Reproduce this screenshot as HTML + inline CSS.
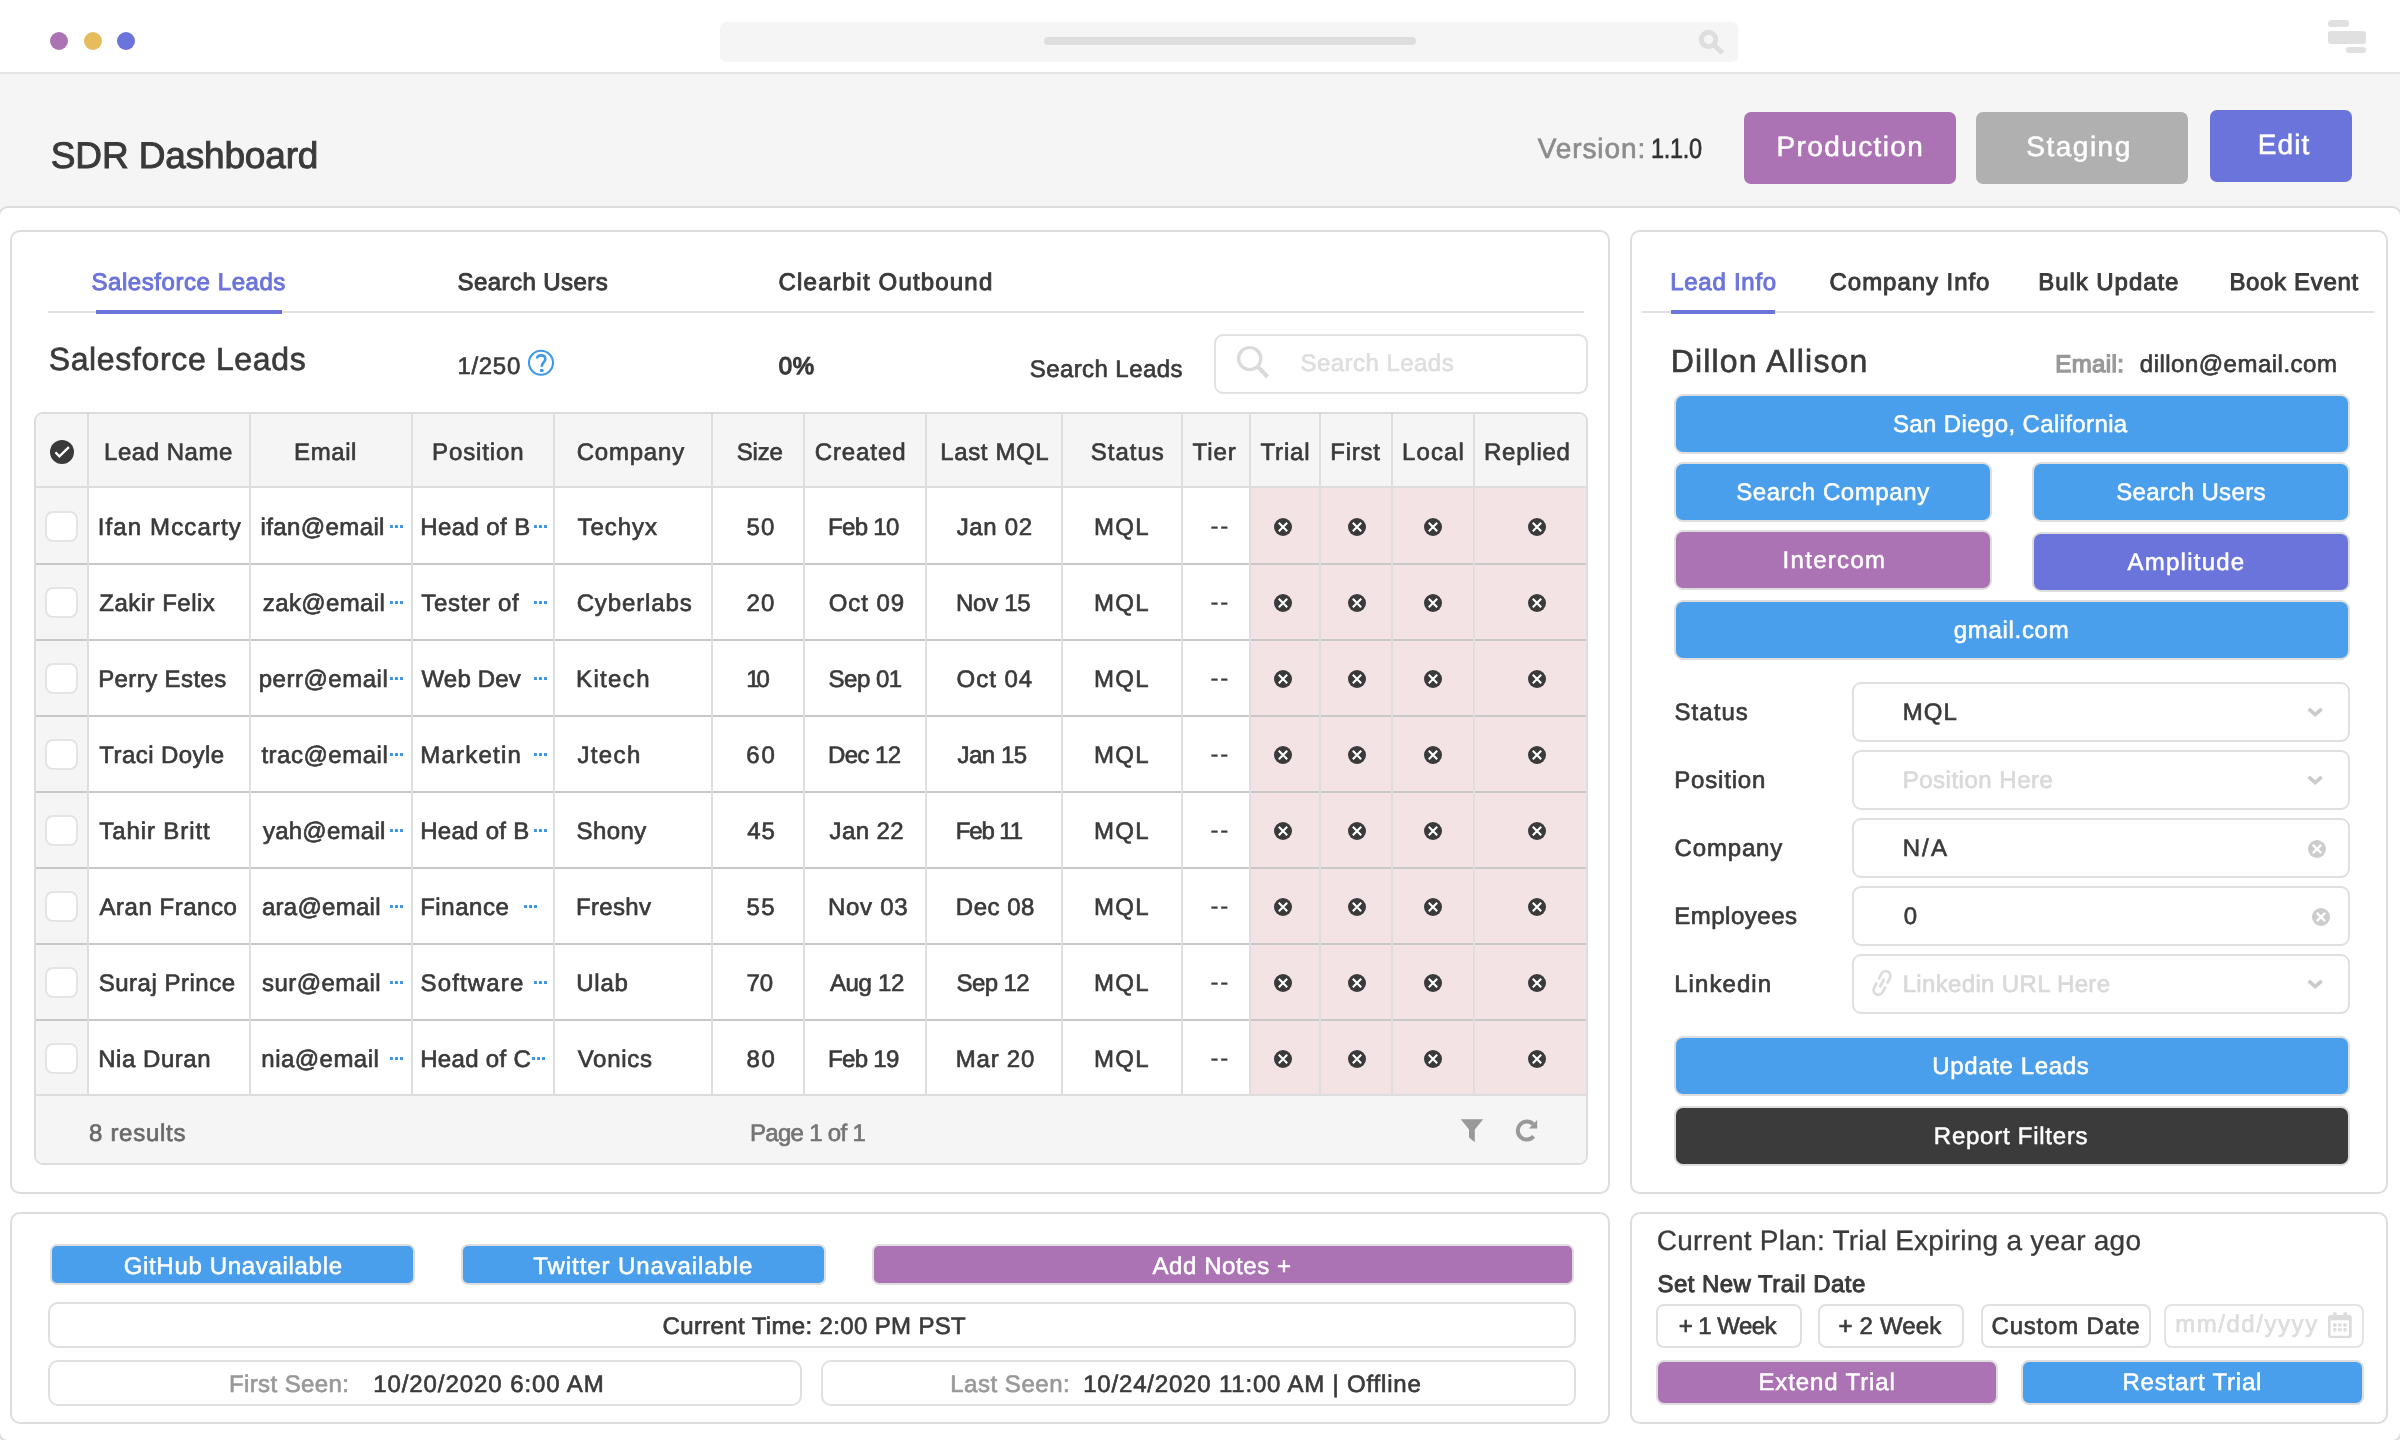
<!DOCTYPE html>
<html><head><meta charset="utf-8"><title>SDR Dashboard</title>
<style>
html,body{margin:0;padding:0;overflow:hidden}
body{width:2400px;height:1440px;overflow:hidden;background:#f5f5f5;position:relative;
font-family:"Liberation Sans",sans-serif;}
.b{position:absolute;box-sizing:border-box}
.tl{position:absolute;left:0;top:0;width:2400px;height:1440px;will-change:transform}
.t{position:absolute;white-space:pre;line-height:1;text-rendering:geometricPrecision;}
.m{-webkit-text-stroke:0.95px currentColor}
.r{-webkit-text-stroke:0.65px currentColor}
.bd{-webkit-text-stroke:1.3px currentColor}
.l{-webkit-text-stroke:0.3px currentColor}
.wm{-webkit-text-stroke:0.5px currentColor}
</style></head>
<body>
<div class="b" style="left:0px;top:0px;width:2400px;height:72px;background:#fff;"></div>
<div class="b" style="left:0px;top:72px;width:2400px;height:2px;background:#e6e6e6;"></div>
<div class="b" style="left:50px;top:32px;width:18px;height:18px;background:#ab72b4;border-radius:9px;"></div>
<div class="b" style="left:83.5px;top:32px;width:18px;height:18px;background:#e6bc5c;border-radius:9px;"></div>
<div class="b" style="left:117px;top:32px;width:18px;height:18px;background:#6b74da;border-radius:9px;"></div>
<div class="b" style="left:720px;top:22px;width:1018px;height:40px;background:#f5f5f5;border-radius:6px;"></div>
<div class="b" style="left:1044px;top:37px;width:372px;height:8px;background:#dedede;border-radius:4px;"></div>
<div class="b" style="left:2328px;top:20px;width:21px;height:7px;background:#e0e0e0;border-radius:3.5px;"></div>
<div class="b" style="left:2328px;top:30.5px;width:38px;height:13px;background:#e0e0e0;border-radius:3px;"></div>
<div class="b" style="left:2346px;top:46.5px;width:20px;height:6px;background:#e0e0e0;border-radius:3px;"></div>
<div class="b" style="left:1744px;top:112px;width:212px;height:72px;background:#ab72b4;border-radius:7px;"></div>
<div class="b" style="left:1976px;top:112px;width:212px;height:72px;background:#b0b0b0;border-radius:7px;"></div>
<div class="b" style="left:2210px;top:110px;width:142px;height:72px;background:#6b74da;border-radius:7px;"></div>
<div class="b" style="left:-2px;top:206px;width:2404px;height:1236px;background:#fff;border:2px solid #dddddd;border-radius:10px;"></div>
<div class="b" style="left:10px;top:230px;width:1600px;height:964px;background:#fff;border:2px solid #dddddd;border-radius:10px;"></div>
<div class="b" style="left:1630px;top:230px;width:758px;height:964px;background:#fff;border:2px solid #dddddd;border-radius:10px;"></div>
<div class="b" style="left:10px;top:1212px;width:1600px;height:212px;background:#fff;border:2px solid #dddddd;border-radius:10px;"></div>
<div class="b" style="left:1630px;top:1212px;width:758px;height:212px;background:#fff;border:2px solid #dddddd;border-radius:10px;"></div>
<div class="b" style="left:48px;top:311px;width:1536px;height:2px;background:#e0e0e0;"></div>
<div class="b" style="left:96px;top:310px;width:186px;height:4px;background:#6b74da;"></div>
<div class="b" style="left:1642px;top:311px;width:732px;height:2px;background:#e0e0e0;"></div>
<div class="b" style="left:1671px;top:310px;width:104px;height:4px;background:#6b74da;"></div>
<div class="b" style="left:1214px;top:334px;width:374px;height:60px;background:#fff;border:2px solid #e2e2e2;border-radius:9px;"></div>
<div class="b" style="left:34px;top:412px;width:1554px;height:753px;background:#fff;border:2px solid #dddddd;border-radius:9px;overflow:hidden;box-sizing:border-box">
<div class="b" style="left:0px;top:0px;width:1554px;height:72px;background:#f5f5f5"></div>
<div class="b" style="left:0px;top:72px;width:52px;height:610px;background:#f5f5f5"></div>
<div class="b" style="left:1215px;top:74px;width:337px;height:606px;background:#f3e3e4"></div>
<div class="b" style="left:0px;top:680px;width:1554px;height:71px;background:#f5f5f5"></div>
<div class="b" style="left:0px;top:72px;width:1554px;height:2px;background:#dddddd"></div>
<div class="b" style="left:0px;top:149px;width:1554px;height:2px;background:#c8c8c8"></div>
<div class="b" style="left:0px;top:225px;width:1554px;height:2px;background:#c8c8c8"></div>
<div class="b" style="left:0px;top:301px;width:1554px;height:2px;background:#c8c8c8"></div>
<div class="b" style="left:0px;top:377px;width:1554px;height:2px;background:#c8c8c8"></div>
<div class="b" style="left:0px;top:453px;width:1554px;height:2px;background:#c8c8c8"></div>
<div class="b" style="left:0px;top:529px;width:1554px;height:2px;background:#c8c8c8"></div>
<div class="b" style="left:0px;top:605px;width:1554px;height:2px;background:#c8c8c8"></div>
<div class="b" style="left:0px;top:680px;width:1554px;height:2px;background:#dddddd"></div>
<div class="b" style="left:51px;top:0px;width:2px;height:681px;background:#dedede"></div>
<div class="b" style="left:213px;top:0px;width:2px;height:681px;background:#dedede"></div>
<div class="b" style="left:375px;top:0px;width:2px;height:681px;background:#dedede"></div>
<div class="b" style="left:517px;top:0px;width:2px;height:681px;background:#dedede"></div>
<div class="b" style="left:675px;top:0px;width:2px;height:681px;background:#dedede"></div>
<div class="b" style="left:767px;top:0px;width:2px;height:681px;background:#dedede"></div>
<div class="b" style="left:889px;top:0px;width:2px;height:681px;background:#dedede"></div>
<div class="b" style="left:1025px;top:0px;width:2px;height:681px;background:#dedede"></div>
<div class="b" style="left:1145px;top:0px;width:2px;height:681px;background:#dedede"></div>
<div class="b" style="left:1213px;top:0px;width:2px;height:681px;background:#dedede"></div>
<div class="b" style="left:1283px;top:0px;width:2px;height:681px;background:#dedede"></div>
<div class="b" style="left:1355px;top:0px;width:2px;height:681px;background:#dedede"></div>
<div class="b" style="left:1437px;top:0px;width:2px;height:681px;background:#dedede"></div>
</div>
<div class="b" style="left:44.5px;top:510.5px;width:33px;height:31px;background:#fff;border:2px solid #e4e4e4;border-radius:8px;"></div>
<div class="b" style="left:44.5px;top:586.5px;width:33px;height:31px;background:#fff;border:2px solid #e4e4e4;border-radius:8px;"></div>
<div class="b" style="left:44.5px;top:662.5px;width:33px;height:31px;background:#fff;border:2px solid #e4e4e4;border-radius:8px;"></div>
<div class="b" style="left:44.5px;top:738.5px;width:33px;height:31px;background:#fff;border:2px solid #e4e4e4;border-radius:8px;"></div>
<div class="b" style="left:44.5px;top:814.5px;width:33px;height:31px;background:#fff;border:2px solid #e4e4e4;border-radius:8px;"></div>
<div class="b" style="left:44.5px;top:890.5px;width:33px;height:31px;background:#fff;border:2px solid #e4e4e4;border-radius:8px;"></div>
<div class="b" style="left:44.5px;top:966.5px;width:33px;height:31px;background:#fff;border:2px solid #e4e4e4;border-radius:8px;"></div>
<div class="b" style="left:44.5px;top:1042.5px;width:33px;height:31px;background:#fff;border:2px solid #e4e4e4;border-radius:8px;"></div>
<div class="b" style="left:1674px;top:394px;width:676px;height:60px;background:#4a9fed;border:2px solid #dedede;border-radius:9px;"></div>
<div class="b" style="left:1674px;top:462px;width:318px;height:60px;background:#4a9fed;border:2px solid #dedede;border-radius:9px;"></div>
<div class="b" style="left:2032px;top:462px;width:318px;height:60px;background:#4a9fed;border:2px solid #dedede;border-radius:9px;"></div>
<div class="b" style="left:1674px;top:530px;width:318px;height:60px;background:#ab72b4;border:2px solid #dedede;border-radius:9px;"></div>
<div class="b" style="left:2032px;top:532px;width:318px;height:60px;background:#6b74da;border:2px solid #dedede;border-radius:9px;"></div>
<div class="b" style="left:1674px;top:600px;width:676px;height:60px;background:#4a9fed;border:2px solid #dedede;border-radius:9px;"></div>
<div class="b" style="left:1852px;top:682px;width:498px;height:60px;background:#fff;border:2px solid #e0e0e0;border-radius:9px;"></div>
<div class="b" style="left:1852px;top:750px;width:498px;height:60px;background:#fff;border:2px solid #e0e0e0;border-radius:9px;"></div>
<div class="b" style="left:1852px;top:818px;width:498px;height:60px;background:#fff;border:2px solid #e0e0e0;border-radius:9px;"></div>
<div class="b" style="left:1852px;top:886px;width:498px;height:60px;background:#fff;border:2px solid #e0e0e0;border-radius:9px;"></div>
<div class="b" style="left:1852px;top:954px;width:498px;height:60px;background:#fff;border:2px solid #e0e0e0;border-radius:9px;"></div>
<div class="b" style="left:1674px;top:1036px;width:676px;height:60px;background:#4a9fed;border:2px solid #dedede;border-radius:9px;"></div>
<div class="b" style="left:1674px;top:1106px;width:676px;height:60px;background:#3b3b3b;border:2px solid #dedede;border-radius:9px;"></div>
<div class="b" style="left:1656px;top:1304px;width:146px;height:44px;background:#fff;border:2px solid #e0e0e0;border-radius:8px;"></div>
<div class="b" style="left:1818px;top:1304px;width:146px;height:44px;background:#fff;border:2px solid #e0e0e0;border-radius:8px;"></div>
<div class="b" style="left:1981px;top:1304px;width:170px;height:44px;background:#fff;border:2px solid #e0e0e0;border-radius:8px;"></div>
<div class="b" style="left:2164px;top:1304px;width:200px;height:44px;background:#fff;border:2px solid #e4e4e4;border-radius:8px;"></div>
<div class="b" style="left:1656px;top:1360px;width:342px;height:45px;background:#ab72b4;border:2px solid #dedede;border-radius:8px;"></div>
<div class="b" style="left:2021px;top:1360px;width:343px;height:45px;background:#4a9fed;border:2px solid #dedede;border-radius:8px;"></div>
<div class="b" style="left:50px;top:1244px;width:365px;height:41px;background:#4a9fed;border:2px solid #dedede;border-radius:7px;"></div>
<div class="b" style="left:461px;top:1244px;width:365px;height:41px;background:#4a9fed;border:2px solid #dedede;border-radius:7px;"></div>
<div class="b" style="left:872px;top:1244px;width:702px;height:41px;background:#ab72b4;border:2px solid #dedede;border-radius:7px;"></div>
<div class="b" style="left:48px;top:1302px;width:1528px;height:46px;background:#fff;border:2px solid #e0e0e0;border-radius:10px;"></div>
<div class="b" style="left:48px;top:1360px;width:754px;height:46px;background:#fff;border:2px solid #e0e0e0;border-radius:10px;"></div>
<div class="b" style="left:821px;top:1360px;width:755px;height:46px;background:#fff;border:2px solid #e0e0e0;border-radius:10px;"></div>
<div class="b" style="left:390px;top:525px;width:3px;height:3px;background:#3a94e8;border-radius:0.5px;"></div>
<div class="b" style="left:395px;top:525px;width:3px;height:3px;background:#3a94e8;border-radius:0.5px;"></div>
<div class="b" style="left:400px;top:525px;width:3px;height:3px;background:#3a94e8;border-radius:0.5px;"></div>
<div class="b" style="left:534px;top:525px;width:3px;height:3px;background:#3a94e8;border-radius:0.5px;"></div>
<div class="b" style="left:539px;top:525px;width:3px;height:3px;background:#3a94e8;border-radius:0.5px;"></div>
<div class="b" style="left:544px;top:525px;width:3px;height:3px;background:#3a94e8;border-radius:0.5px;"></div>
<div class="b" style="left:390px;top:601px;width:3px;height:3px;background:#3a94e8;border-radius:0.5px;"></div>
<div class="b" style="left:395px;top:601px;width:3px;height:3px;background:#3a94e8;border-radius:0.5px;"></div>
<div class="b" style="left:400px;top:601px;width:3px;height:3px;background:#3a94e8;border-radius:0.5px;"></div>
<div class="b" style="left:534px;top:601px;width:3px;height:3px;background:#3a94e8;border-radius:0.5px;"></div>
<div class="b" style="left:539px;top:601px;width:3px;height:3px;background:#3a94e8;border-radius:0.5px;"></div>
<div class="b" style="left:544px;top:601px;width:3px;height:3px;background:#3a94e8;border-radius:0.5px;"></div>
<div class="b" style="left:390px;top:677px;width:3px;height:3px;background:#3a94e8;border-radius:0.5px;"></div>
<div class="b" style="left:395px;top:677px;width:3px;height:3px;background:#3a94e8;border-radius:0.5px;"></div>
<div class="b" style="left:400px;top:677px;width:3px;height:3px;background:#3a94e8;border-radius:0.5px;"></div>
<div class="b" style="left:534px;top:677px;width:3px;height:3px;background:#3a94e8;border-radius:0.5px;"></div>
<div class="b" style="left:539px;top:677px;width:3px;height:3px;background:#3a94e8;border-radius:0.5px;"></div>
<div class="b" style="left:544px;top:677px;width:3px;height:3px;background:#3a94e8;border-radius:0.5px;"></div>
<div class="b" style="left:390px;top:753px;width:3px;height:3px;background:#3a94e8;border-radius:0.5px;"></div>
<div class="b" style="left:395px;top:753px;width:3px;height:3px;background:#3a94e8;border-radius:0.5px;"></div>
<div class="b" style="left:400px;top:753px;width:3px;height:3px;background:#3a94e8;border-radius:0.5px;"></div>
<div class="b" style="left:534px;top:753px;width:3px;height:3px;background:#3a94e8;border-radius:0.5px;"></div>
<div class="b" style="left:539px;top:753px;width:3px;height:3px;background:#3a94e8;border-radius:0.5px;"></div>
<div class="b" style="left:544px;top:753px;width:3px;height:3px;background:#3a94e8;border-radius:0.5px;"></div>
<div class="b" style="left:390px;top:829px;width:3px;height:3px;background:#3a94e8;border-radius:0.5px;"></div>
<div class="b" style="left:395px;top:829px;width:3px;height:3px;background:#3a94e8;border-radius:0.5px;"></div>
<div class="b" style="left:400px;top:829px;width:3px;height:3px;background:#3a94e8;border-radius:0.5px;"></div>
<div class="b" style="left:534px;top:829px;width:3px;height:3px;background:#3a94e8;border-radius:0.5px;"></div>
<div class="b" style="left:539px;top:829px;width:3px;height:3px;background:#3a94e8;border-radius:0.5px;"></div>
<div class="b" style="left:544px;top:829px;width:3px;height:3px;background:#3a94e8;border-radius:0.5px;"></div>
<div class="b" style="left:390px;top:905px;width:3px;height:3px;background:#3a94e8;border-radius:0.5px;"></div>
<div class="b" style="left:395px;top:905px;width:3px;height:3px;background:#3a94e8;border-radius:0.5px;"></div>
<div class="b" style="left:400px;top:905px;width:3px;height:3px;background:#3a94e8;border-radius:0.5px;"></div>
<div class="b" style="left:524px;top:905px;width:3px;height:3px;background:#3a94e8;border-radius:0.5px;"></div>
<div class="b" style="left:529px;top:905px;width:3px;height:3px;background:#3a94e8;border-radius:0.5px;"></div>
<div class="b" style="left:534px;top:905px;width:3px;height:3px;background:#3a94e8;border-radius:0.5px;"></div>
<div class="b" style="left:390px;top:981px;width:3px;height:3px;background:#3a94e8;border-radius:0.5px;"></div>
<div class="b" style="left:395px;top:981px;width:3px;height:3px;background:#3a94e8;border-radius:0.5px;"></div>
<div class="b" style="left:400px;top:981px;width:3px;height:3px;background:#3a94e8;border-radius:0.5px;"></div>
<div class="b" style="left:534px;top:981px;width:3px;height:3px;background:#3a94e8;border-radius:0.5px;"></div>
<div class="b" style="left:539px;top:981px;width:3px;height:3px;background:#3a94e8;border-radius:0.5px;"></div>
<div class="b" style="left:544px;top:981px;width:3px;height:3px;background:#3a94e8;border-radius:0.5px;"></div>
<div class="b" style="left:390px;top:1057px;width:3px;height:3px;background:#3a94e8;border-radius:0.5px;"></div>
<div class="b" style="left:395px;top:1057px;width:3px;height:3px;background:#3a94e8;border-radius:0.5px;"></div>
<div class="b" style="left:400px;top:1057px;width:3px;height:3px;background:#3a94e8;border-radius:0.5px;"></div>
<div class="b" style="left:532px;top:1057px;width:3px;height:3px;background:#3a94e8;border-radius:0.5px;"></div>
<div class="b" style="left:537px;top:1057px;width:3px;height:3px;background:#3a94e8;border-radius:0.5px;"></div>
<div class="b" style="left:542px;top:1057px;width:3px;height:3px;background:#3a94e8;border-radius:0.5px;"></div>
<svg class="b" style="left:1698px;top:29px" width="28" height="27" viewBox="0 0 28 27"><circle cx="10.5" cy="10.5" r="7.2" fill="none" stroke="#dedede" stroke-width="5"/><path d="M16 16 L24.5 24" stroke="#dedede" stroke-width="5" stroke-linecap="butt"/></svg>
<svg class="b" style="left:1235px;top:345px" width="38" height="38" viewBox="0 0 38 38"><circle cx="14.7" cy="13.6" r="11.1" fill="none" stroke="#dadada" stroke-width="3.2"/><path d="M22.4 21.4 L32.6 31.8" stroke="#dadada" stroke-width="4.2" stroke-linecap="butt"/></svg>
<svg class="b" style="left:527px;top:349px" width="28" height="28" viewBox="0 0 28 28"><circle cx="14" cy="13.8" r="12" fill="none" stroke="#3f99e9" stroke-width="2.1"/><path d="M10 9.6 C10 7.2 12 6.4 14.2 6.4 C16.6 6.4 18.3 7.9 18.3 10.1 C18.3 13.4 14.8 13.2 14.8 17.7" fill="none" stroke="#3f99e9" stroke-width="2.6"/><rect x="12.9" y="19.9" width="3.8" height="3.2" rx="1" fill="#3f99e9"/></svg>
<svg class="b" style="left:50px;top:440px" width="24" height="24" viewBox="0 0 24 24"><circle cx="12" cy="12" r="12" fill="#3a3a3a"/><path d="M5.4 12.3 L9.4 16.4 L18.9 7.1" fill="none" stroke="#fff" stroke-width="2.3" stroke-linecap="butt" stroke-linejoin="miter"/></svg>
<svg class="b" style="left:1274px;top:518px" width="18" height="18" viewBox="0 0 18 18"><circle cx="9" cy="9" r="9" fill="#3a3a3a"/><path d="M4.8 4.8 L13.2 13.2 M13.2 4.8 L4.8 13.2" stroke="#fff" stroke-width="2.1" stroke-linecap="butt"/></svg>
<svg class="b" style="left:1348px;top:518px" width="18" height="18" viewBox="0 0 18 18"><circle cx="9" cy="9" r="9" fill="#3a3a3a"/><path d="M4.8 4.8 L13.2 13.2 M13.2 4.8 L4.8 13.2" stroke="#fff" stroke-width="2.1" stroke-linecap="butt"/></svg>
<svg class="b" style="left:1424px;top:518px" width="18" height="18" viewBox="0 0 18 18"><circle cx="9" cy="9" r="9" fill="#3a3a3a"/><path d="M4.8 4.8 L13.2 13.2 M13.2 4.8 L4.8 13.2" stroke="#fff" stroke-width="2.1" stroke-linecap="butt"/></svg>
<svg class="b" style="left:1528px;top:518px" width="18" height="18" viewBox="0 0 18 18"><circle cx="9" cy="9" r="9" fill="#3a3a3a"/><path d="M4.8 4.8 L13.2 13.2 M13.2 4.8 L4.8 13.2" stroke="#fff" stroke-width="2.1" stroke-linecap="butt"/></svg>
<svg class="b" style="left:1274px;top:594px" width="18" height="18" viewBox="0 0 18 18"><circle cx="9" cy="9" r="9" fill="#3a3a3a"/><path d="M4.8 4.8 L13.2 13.2 M13.2 4.8 L4.8 13.2" stroke="#fff" stroke-width="2.1" stroke-linecap="butt"/></svg>
<svg class="b" style="left:1348px;top:594px" width="18" height="18" viewBox="0 0 18 18"><circle cx="9" cy="9" r="9" fill="#3a3a3a"/><path d="M4.8 4.8 L13.2 13.2 M13.2 4.8 L4.8 13.2" stroke="#fff" stroke-width="2.1" stroke-linecap="butt"/></svg>
<svg class="b" style="left:1424px;top:594px" width="18" height="18" viewBox="0 0 18 18"><circle cx="9" cy="9" r="9" fill="#3a3a3a"/><path d="M4.8 4.8 L13.2 13.2 M13.2 4.8 L4.8 13.2" stroke="#fff" stroke-width="2.1" stroke-linecap="butt"/></svg>
<svg class="b" style="left:1528px;top:594px" width="18" height="18" viewBox="0 0 18 18"><circle cx="9" cy="9" r="9" fill="#3a3a3a"/><path d="M4.8 4.8 L13.2 13.2 M13.2 4.8 L4.8 13.2" stroke="#fff" stroke-width="2.1" stroke-linecap="butt"/></svg>
<svg class="b" style="left:1274px;top:670px" width="18" height="18" viewBox="0 0 18 18"><circle cx="9" cy="9" r="9" fill="#3a3a3a"/><path d="M4.8 4.8 L13.2 13.2 M13.2 4.8 L4.8 13.2" stroke="#fff" stroke-width="2.1" stroke-linecap="butt"/></svg>
<svg class="b" style="left:1348px;top:670px" width="18" height="18" viewBox="0 0 18 18"><circle cx="9" cy="9" r="9" fill="#3a3a3a"/><path d="M4.8 4.8 L13.2 13.2 M13.2 4.8 L4.8 13.2" stroke="#fff" stroke-width="2.1" stroke-linecap="butt"/></svg>
<svg class="b" style="left:1424px;top:670px" width="18" height="18" viewBox="0 0 18 18"><circle cx="9" cy="9" r="9" fill="#3a3a3a"/><path d="M4.8 4.8 L13.2 13.2 M13.2 4.8 L4.8 13.2" stroke="#fff" stroke-width="2.1" stroke-linecap="butt"/></svg>
<svg class="b" style="left:1528px;top:670px" width="18" height="18" viewBox="0 0 18 18"><circle cx="9" cy="9" r="9" fill="#3a3a3a"/><path d="M4.8 4.8 L13.2 13.2 M13.2 4.8 L4.8 13.2" stroke="#fff" stroke-width="2.1" stroke-linecap="butt"/></svg>
<svg class="b" style="left:1274px;top:746px" width="18" height="18" viewBox="0 0 18 18"><circle cx="9" cy="9" r="9" fill="#3a3a3a"/><path d="M4.8 4.8 L13.2 13.2 M13.2 4.8 L4.8 13.2" stroke="#fff" stroke-width="2.1" stroke-linecap="butt"/></svg>
<svg class="b" style="left:1348px;top:746px" width="18" height="18" viewBox="0 0 18 18"><circle cx="9" cy="9" r="9" fill="#3a3a3a"/><path d="M4.8 4.8 L13.2 13.2 M13.2 4.8 L4.8 13.2" stroke="#fff" stroke-width="2.1" stroke-linecap="butt"/></svg>
<svg class="b" style="left:1424px;top:746px" width="18" height="18" viewBox="0 0 18 18"><circle cx="9" cy="9" r="9" fill="#3a3a3a"/><path d="M4.8 4.8 L13.2 13.2 M13.2 4.8 L4.8 13.2" stroke="#fff" stroke-width="2.1" stroke-linecap="butt"/></svg>
<svg class="b" style="left:1528px;top:746px" width="18" height="18" viewBox="0 0 18 18"><circle cx="9" cy="9" r="9" fill="#3a3a3a"/><path d="M4.8 4.8 L13.2 13.2 M13.2 4.8 L4.8 13.2" stroke="#fff" stroke-width="2.1" stroke-linecap="butt"/></svg>
<svg class="b" style="left:1274px;top:822px" width="18" height="18" viewBox="0 0 18 18"><circle cx="9" cy="9" r="9" fill="#3a3a3a"/><path d="M4.8 4.8 L13.2 13.2 M13.2 4.8 L4.8 13.2" stroke="#fff" stroke-width="2.1" stroke-linecap="butt"/></svg>
<svg class="b" style="left:1348px;top:822px" width="18" height="18" viewBox="0 0 18 18"><circle cx="9" cy="9" r="9" fill="#3a3a3a"/><path d="M4.8 4.8 L13.2 13.2 M13.2 4.8 L4.8 13.2" stroke="#fff" stroke-width="2.1" stroke-linecap="butt"/></svg>
<svg class="b" style="left:1424px;top:822px" width="18" height="18" viewBox="0 0 18 18"><circle cx="9" cy="9" r="9" fill="#3a3a3a"/><path d="M4.8 4.8 L13.2 13.2 M13.2 4.8 L4.8 13.2" stroke="#fff" stroke-width="2.1" stroke-linecap="butt"/></svg>
<svg class="b" style="left:1528px;top:822px" width="18" height="18" viewBox="0 0 18 18"><circle cx="9" cy="9" r="9" fill="#3a3a3a"/><path d="M4.8 4.8 L13.2 13.2 M13.2 4.8 L4.8 13.2" stroke="#fff" stroke-width="2.1" stroke-linecap="butt"/></svg>
<svg class="b" style="left:1274px;top:898px" width="18" height="18" viewBox="0 0 18 18"><circle cx="9" cy="9" r="9" fill="#3a3a3a"/><path d="M4.8 4.8 L13.2 13.2 M13.2 4.8 L4.8 13.2" stroke="#fff" stroke-width="2.1" stroke-linecap="butt"/></svg>
<svg class="b" style="left:1348px;top:898px" width="18" height="18" viewBox="0 0 18 18"><circle cx="9" cy="9" r="9" fill="#3a3a3a"/><path d="M4.8 4.8 L13.2 13.2 M13.2 4.8 L4.8 13.2" stroke="#fff" stroke-width="2.1" stroke-linecap="butt"/></svg>
<svg class="b" style="left:1424px;top:898px" width="18" height="18" viewBox="0 0 18 18"><circle cx="9" cy="9" r="9" fill="#3a3a3a"/><path d="M4.8 4.8 L13.2 13.2 M13.2 4.8 L4.8 13.2" stroke="#fff" stroke-width="2.1" stroke-linecap="butt"/></svg>
<svg class="b" style="left:1528px;top:898px" width="18" height="18" viewBox="0 0 18 18"><circle cx="9" cy="9" r="9" fill="#3a3a3a"/><path d="M4.8 4.8 L13.2 13.2 M13.2 4.8 L4.8 13.2" stroke="#fff" stroke-width="2.1" stroke-linecap="butt"/></svg>
<svg class="b" style="left:1274px;top:974px" width="18" height="18" viewBox="0 0 18 18"><circle cx="9" cy="9" r="9" fill="#3a3a3a"/><path d="M4.8 4.8 L13.2 13.2 M13.2 4.8 L4.8 13.2" stroke="#fff" stroke-width="2.1" stroke-linecap="butt"/></svg>
<svg class="b" style="left:1348px;top:974px" width="18" height="18" viewBox="0 0 18 18"><circle cx="9" cy="9" r="9" fill="#3a3a3a"/><path d="M4.8 4.8 L13.2 13.2 M13.2 4.8 L4.8 13.2" stroke="#fff" stroke-width="2.1" stroke-linecap="butt"/></svg>
<svg class="b" style="left:1424px;top:974px" width="18" height="18" viewBox="0 0 18 18"><circle cx="9" cy="9" r="9" fill="#3a3a3a"/><path d="M4.8 4.8 L13.2 13.2 M13.2 4.8 L4.8 13.2" stroke="#fff" stroke-width="2.1" stroke-linecap="butt"/></svg>
<svg class="b" style="left:1528px;top:974px" width="18" height="18" viewBox="0 0 18 18"><circle cx="9" cy="9" r="9" fill="#3a3a3a"/><path d="M4.8 4.8 L13.2 13.2 M13.2 4.8 L4.8 13.2" stroke="#fff" stroke-width="2.1" stroke-linecap="butt"/></svg>
<svg class="b" style="left:1274px;top:1050px" width="18" height="18" viewBox="0 0 18 18"><circle cx="9" cy="9" r="9" fill="#3a3a3a"/><path d="M4.8 4.8 L13.2 13.2 M13.2 4.8 L4.8 13.2" stroke="#fff" stroke-width="2.1" stroke-linecap="butt"/></svg>
<svg class="b" style="left:1348px;top:1050px" width="18" height="18" viewBox="0 0 18 18"><circle cx="9" cy="9" r="9" fill="#3a3a3a"/><path d="M4.8 4.8 L13.2 13.2 M13.2 4.8 L4.8 13.2" stroke="#fff" stroke-width="2.1" stroke-linecap="butt"/></svg>
<svg class="b" style="left:1424px;top:1050px" width="18" height="18" viewBox="0 0 18 18"><circle cx="9" cy="9" r="9" fill="#3a3a3a"/><path d="M4.8 4.8 L13.2 13.2 M13.2 4.8 L4.8 13.2" stroke="#fff" stroke-width="2.1" stroke-linecap="butt"/></svg>
<svg class="b" style="left:1528px;top:1050px" width="18" height="18" viewBox="0 0 18 18"><circle cx="9" cy="9" r="9" fill="#3a3a3a"/><path d="M4.8 4.8 L13.2 13.2 M13.2 4.8 L4.8 13.2" stroke="#fff" stroke-width="2.1" stroke-linecap="butt"/></svg>
<svg class="b" style="left:2308px;top:840px" width="18" height="18" viewBox="0 0 18 18"><circle cx="9" cy="9" r="9" fill="#cccccc"/><path d="M4.8 4.8 L13.2 13.2 M13.2 4.8 L4.8 13.2" stroke="#fff" stroke-width="2.4" stroke-linecap="butt"/></svg>
<svg class="b" style="left:2312px;top:908px" width="18" height="18" viewBox="0 0 18 18"><circle cx="9" cy="9" r="9" fill="#cccccc"/><path d="M4.8 4.8 L13.2 13.2 M13.2 4.8 L4.8 13.2" stroke="#fff" stroke-width="2.4" stroke-linecap="butt"/></svg>
<svg class="b" style="left:2306px;top:706px" width="18" height="12" viewBox="0 0 18 12"><path d="M2.7 2.9 L9.2 8.6 L15.7 2.9" fill="none" stroke="#cbcbcb" stroke-width="3.5" stroke-linecap="butt" stroke-linejoin="miter"/></svg>
<svg class="b" style="left:2306px;top:774px" width="18" height="12" viewBox="0 0 18 12"><path d="M2.7 2.9 L9.2 8.6 L15.7 2.9" fill="none" stroke="#cbcbcb" stroke-width="3.5" stroke-linecap="butt" stroke-linejoin="miter"/></svg>
<svg class="b" style="left:2306px;top:978px" width="18" height="12" viewBox="0 0 18 12"><path d="M2.7 2.9 L9.2 8.6 L15.7 2.9" fill="none" stroke="#cbcbcb" stroke-width="3.5" stroke-linecap="butt" stroke-linejoin="miter"/></svg>
<svg class="b" style="left:1867.4px;top:965.9px" width="30" height="34" viewBox="0 0 30 34"><g transform="translate(15 17) rotate(27.5)" fill="none" stroke="#dcdcdc" stroke-width="2.6" stroke-linecap="butt"><path d="M-4.8 -1.7 L-4.8 -7.95 A4.8 4.8 0 0 1 4.8 -7.95 L4.8 -1.7"/><path d="M-4.8 1.7 L-4.8 7.95 A4.8 4.8 0 0 0 4.8 7.95 L4.8 1.7"/><path d="M0 -5 L0 5"/></g></svg>
<svg class="b" style="left:2327px;top:1311px" width="26" height="28" viewBox="0 0 26 28"><rect x="1" y="4.1" width="23.7" height="22.8" rx="2.6" fill="#dcdcdc"/><rect x="3.6" y="9.3" width="18.4" height="15.4" fill="#fff"/><rect x="6.1" y="1.2" width="3.5" height="4.5" rx="0.8" fill="#dcdcdc"/><rect x="16.3" y="1.2" width="3.6" height="4.5" rx="0.8" fill="#dcdcdc"/><g fill="#dcdcdc"><rect x="6.1" y="12.3" width="3.4" height="3.4" rx="1"/><rect x="11.1" y="12.3" width="3.4" height="3.4" rx="1"/><rect x="16.3" y="12.3" width="3.4" height="3.4" rx="1"/><rect x="6.1" y="17.1" width="3.4" height="3.4" rx="1"/><rect x="11.1" y="17.1" width="3.4" height="3.4" rx="1"/><rect x="16.3" y="17.1" width="3.4" height="3.4" rx="1"/></g></svg>
<svg class="b" style="left:1460px;top:1118px" width="24" height="26" viewBox="0 0 24 26"><path d="M0.8 1.2 L23.2 1.2 L14.8 11.5 L14.8 24.2 L9 19.5 L9 11.5 Z" fill="#999"/></svg>
<svg class="b" style="left:1513px;top:1117px" width="28" height="28" viewBox="0 0 28 28"><path d="M20.6 19.4 A9 9 0 1 1 20.2 7.2" fill="none" stroke="#999" stroke-width="4"/><path d="M24.2 3 L24.2 11.4 L15.8 11.4 Z" fill="#999"/></svg>
<div class="tl">
<span class="t m" style="left:50.84px;top:137.00px;font-size:37px;color:#3a3a3a;letter-spacing:-0.149px;">SDR Dashboard</span>
<span class="t r" style="left:1537.67px;top:135.00px;font-size:28px;color:#8c8c8c;letter-spacing:0.912px;">Version:</span>
<span class="t r" style="left:1650.74px;top:135.00px;font-size:28px;color:#333;letter-spacing:-0.377px;transform:scaleX(0.84);transform-origin:0 0;">1.1.0</span>
<span class="t wm" style="left:1776.45px;top:133.00px;font-size:28px;color:#fff;letter-spacing:1.399px;">Production</span>
<span class="t wm" style="left:2026.33px;top:133.00px;font-size:28px;color:#fff;letter-spacing:1.492px;">Staging</span>
<span class="t wm" style="left:2257.87px;top:131.00px;font-size:28px;color:#fff;letter-spacing:1.080px;">Edit</span>
<span class="t m" style="left:91.46px;top:271.00px;font-size:24px;color:#6b74da;letter-spacing:0.564px;">Salesforce Leads</span>
<span class="t m" style="left:457.46px;top:271.00px;font-size:24px;color:#3a3a3a;letter-spacing:0.448px;">Search Users</span>
<span class="t m" style="left:778.60px;top:271.00px;font-size:24px;color:#3a3a3a;letter-spacing:1.179px;">Clearbit Outbound</span>
<span class="t r" style="left:48.65px;top:343.00px;font-size:32px;color:#3a3a3a;letter-spacing:0.654px;">Salesforce Leads</span>
<span class="t r" style="left:457.42px;top:355.00px;font-size:24px;color:#3a3a3a;letter-spacing:0.699px;">1/250</span>
<span class="t bd" style="left:778.79px;top:355.00px;font-size:24px;color:#3a3a3a;letter-spacing:0.729px;">0%</span>
<span class="t r" style="left:1029.71px;top:358.00px;font-size:24px;color:#3a3a3a;letter-spacing:0.422px;">Search Leads</span>
<span class="t r" style="left:1300.57px;top:352.00px;font-size:24px;color:#dedede;letter-spacing:0.452px;">Search Leads</span>
<span class="t r" style="left:104.05px;top:441.00px;font-size:24px;color:#3a3a3a;letter-spacing:0.529px;">Lead Name</span>
<span class="t r" style="left:294.05px;top:441.00px;font-size:24px;color:#3a3a3a;letter-spacing:0.593px;">Email</span>
<span class="t r" style="left:432.05px;top:441.00px;font-size:24px;color:#3a3a3a;letter-spacing:0.868px;">Position</span>
<span class="t r" style="left:576.63px;top:441.00px;font-size:24px;color:#3a3a3a;letter-spacing:0.798px;">Company</span>
<span class="t r" style="left:736.75px;top:441.00px;font-size:24px;color:#3a3a3a;letter-spacing:-0.156px;">Size</span>
<span class="t r" style="left:814.63px;top:441.00px;font-size:24px;color:#3a3a3a;letter-spacing:0.926px;">Created</span>
<span class="t r" style="left:940.29px;top:441.00px;font-size:24px;color:#3a3a3a;letter-spacing:0.624px;">Last MQL</span>
<span class="t r" style="left:1090.75px;top:441.00px;font-size:24px;color:#3a3a3a;letter-spacing:0.998px;">Status</span>
<span class="t r" style="left:1192.50px;top:441.00px;font-size:24px;color:#3a3a3a;letter-spacing:0.930px;">Tier</span>
<span class="t r" style="left:1260.50px;top:441.00px;font-size:24px;color:#3a3a3a;letter-spacing:0.823px;">Trial</span>
<span class="t r" style="left:1330.29px;top:441.00px;font-size:24px;color:#3a3a3a;letter-spacing:0.720px;">First</span>
<span class="t r" style="left:1402.05px;top:441.00px;font-size:24px;color:#3a3a3a;letter-spacing:1.125px;">Local</span>
<span class="t r" style="left:1484.05px;top:441.00px;font-size:24px;color:#3a3a3a;letter-spacing:0.744px;">Replied</span>
<span class="t r" style="left:97.79px;top:516.00px;font-size:24px;color:#3a3a3a;letter-spacing:1.121px;">Ifan Mccarty</span>
<span class="t r" style="left:260.42px;top:516.00px;font-size:24px;color:#3a3a3a;letter-spacing:0.403px;">ifan@email</span>
<span class="t r" style="left:420.16px;top:516.00px;font-size:24px;color:#3a3a3a;letter-spacing:0.408px;">Head of B</span>
<span class="t r" style="left:577.50px;top:516.00px;font-size:24px;color:#3a3a3a;letter-spacing:0.970px;">Techyx</span>
<span class="t r" style="left:746.56px;top:516.00px;font-size:24px;color:#3a3a3a;letter-spacing:1.062px;">50</span>
<span class="t r" style="left:828.05px;top:516.00px;font-size:24px;color:#3a3a3a;letter-spacing:-0.707px;">Feb 10</span>
<span class="t r" style="left:956.67px;top:516.00px;font-size:24px;color:#3a3a3a;letter-spacing:0.656px;">Jan 02</span>
<span class="t r" style="left:1094.05px;top:516.00px;font-size:24px;color:#3a3a3a;letter-spacing:1.311px;">MQL</span>
<span class="t l" style="left:1210.61px;top:515.00px;font-size:24px;color:#3a3a3a;letter-spacing:1.530px;">--</span>
<span class="t r" style="left:99.30px;top:592.00px;font-size:24px;color:#3a3a3a;letter-spacing:0.480px;">Zakir Felix</span>
<span class="t r" style="left:262.80px;top:592.00px;font-size:24px;color:#3a3a3a;letter-spacing:0.376px;">zak@email</span>
<span class="t r" style="left:421.25px;top:592.00px;font-size:24px;color:#3a3a3a;letter-spacing:0.679px;">Tester of</span>
<span class="t r" style="left:576.63px;top:592.00px;font-size:24px;color:#3a3a3a;letter-spacing:0.896px;">Cyberlabs</span>
<span class="t r" style="left:746.46px;top:592.00px;font-size:24px;color:#3a3a3a;letter-spacing:1.170px;">20</span>
<span class="t r" style="left:828.65px;top:592.00px;font-size:24px;color:#3a3a3a;letter-spacing:0.944px;">Oct 09</span>
<span class="t r" style="left:956.05px;top:592.00px;font-size:24px;color:#3a3a3a;letter-spacing:-0.299px;">Nov 15</span>
<span class="t r" style="left:1094.05px;top:592.00px;font-size:24px;color:#3a3a3a;letter-spacing:1.311px;">MQL</span>
<span class="t l" style="left:1210.61px;top:591.00px;font-size:24px;color:#3a3a3a;letter-spacing:1.530px;">--</span>
<span class="t r" style="left:98.17px;top:668.00px;font-size:24px;color:#3a3a3a;letter-spacing:0.410px;">Perry Estes</span>
<span class="t r" style="left:258.71px;top:668.00px;font-size:24px;color:#3a3a3a;letter-spacing:0.515px;">perr@email</span>
<span class="t r" style="left:421.51px;top:668.00px;font-size:24px;color:#3a3a3a;letter-spacing:0.156px;">Web Dev</span>
<span class="t r" style="left:576.05px;top:668.00px;font-size:24px;color:#3a3a3a;letter-spacing:1.349px;">Kitech</span>
<span class="t r" style="left:746.18px;top:668.00px;font-size:24px;color:#3a3a3a;letter-spacing:-2.959px;">10</span>
<span class="t r" style="left:828.57px;top:668.00px;font-size:24px;color:#3a3a3a;letter-spacing:-0.501px;">Sep 01</span>
<span class="t r" style="left:956.58px;top:668.00px;font-size:24px;color:#3a3a3a;letter-spacing:0.962px;">Oct 04</span>
<span class="t r" style="left:1094.05px;top:668.00px;font-size:24px;color:#3a3a3a;letter-spacing:1.311px;">MQL</span>
<span class="t l" style="left:1210.61px;top:667.00px;font-size:24px;color:#3a3a3a;letter-spacing:1.530px;">--</span>
<span class="t r" style="left:99.25px;top:744.00px;font-size:24px;color:#3a3a3a;letter-spacing:0.443px;">Traci Doyle</span>
<span class="t r" style="left:261.42px;top:744.00px;font-size:24px;color:#3a3a3a;letter-spacing:0.510px;">trac@email</span>
<span class="t r" style="left:420.16px;top:744.00px;font-size:24px;color:#3a3a3a;letter-spacing:1.232px;">Marketin</span>
<span class="t r" style="left:577.51px;top:744.00px;font-size:24px;color:#3a3a3a;letter-spacing:1.352px;">Jtech</span>
<span class="t r" style="left:746.33px;top:744.00px;font-size:24px;color:#3a3a3a;letter-spacing:1.787px;">60</span>
<span class="t r" style="left:828.05px;top:744.00px;font-size:24px;color:#3a3a3a;letter-spacing:-0.586px;">Dec 12</span>
<span class="t r" style="left:957.42px;top:744.00px;font-size:24px;color:#3a3a3a;letter-spacing:-0.451px;">Jan 15</span>
<span class="t r" style="left:1094.05px;top:744.00px;font-size:24px;color:#3a3a3a;letter-spacing:1.311px;">MQL</span>
<span class="t l" style="left:1210.61px;top:743.00px;font-size:24px;color:#3a3a3a;letter-spacing:1.530px;">--</span>
<span class="t r" style="left:99.25px;top:820.00px;font-size:24px;color:#3a3a3a;letter-spacing:0.902px;">Tahir Britt</span>
<span class="t r" style="left:262.90px;top:820.00px;font-size:24px;color:#3a3a3a;letter-spacing:0.249px;">yah@email</span>
<span class="t r" style="left:420.16px;top:820.00px;font-size:24px;color:#3a3a3a;letter-spacing:0.292px;">Head of B</span>
<span class="t r" style="left:576.57px;top:820.00px;font-size:24px;color:#3a3a3a;letter-spacing:0.430px;">Shony</span>
<span class="t r" style="left:747.21px;top:820.00px;font-size:24px;color:#3a3a3a;letter-spacing:0.832px;">45</span>
<span class="t r" style="left:829.51px;top:820.00px;font-size:24px;color:#3a3a3a;letter-spacing:0.398px;">Jan 22</span>
<span class="t r" style="left:955.80px;top:820.00px;font-size:24px;color:#3a3a3a;letter-spacing:-1.115px;">Feb 11</span>
<span class="t r" style="left:1094.05px;top:820.00px;font-size:24px;color:#3a3a3a;letter-spacing:1.311px;">MQL</span>
<span class="t l" style="left:1210.61px;top:819.00px;font-size:24px;color:#3a3a3a;letter-spacing:1.530px;">--</span>
<span class="t r" style="left:99.52px;top:896.00px;font-size:24px;color:#3a3a3a;letter-spacing:0.520px;">Aran Franco</span>
<span class="t r" style="left:261.99px;top:896.00px;font-size:24px;color:#3a3a3a;letter-spacing:0.269px;">ara@email</span>
<span class="t r" style="left:420.16px;top:896.00px;font-size:24px;color:#3a3a3a;letter-spacing:0.557px;">Finance</span>
<span class="t r" style="left:576.05px;top:896.00px;font-size:24px;color:#3a3a3a;letter-spacing:0.300px;">Freshv</span>
<span class="t r" style="left:746.56px;top:896.00px;font-size:24px;color:#3a3a3a;letter-spacing:1.477px;">55</span>
<span class="t r" style="left:828.05px;top:896.00px;font-size:24px;color:#3a3a3a;letter-spacing:0.694px;">Nov 03</span>
<span class="t r" style="left:955.80px;top:896.00px;font-size:24px;color:#3a3a3a;letter-spacing:0.510px;">Dec 08</span>
<span class="t r" style="left:1094.05px;top:896.00px;font-size:24px;color:#3a3a3a;letter-spacing:1.311px;">MQL</span>
<span class="t l" style="left:1210.61px;top:895.00px;font-size:24px;color:#3a3a3a;letter-spacing:1.530px;">--</span>
<span class="t r" style="left:98.75px;top:972.00px;font-size:24px;color:#3a3a3a;letter-spacing:0.503px;">Suraj Prince</span>
<span class="t r" style="left:262.01px;top:972.00px;font-size:24px;color:#3a3a3a;letter-spacing:0.449px;">sur@email</span>
<span class="t r" style="left:420.50px;top:972.00px;font-size:24px;color:#3a3a3a;letter-spacing:1.159px;">Software</span>
<span class="t r" style="left:576.16px;top:972.00px;font-size:24px;color:#3a3a3a;letter-spacing:0.816px;">Ulab</span>
<span class="t r" style="left:746.38px;top:972.00px;font-size:24px;color:#3a3a3a;letter-spacing:0.082px;">70</span>
<span class="t r" style="left:829.88px;top:972.00px;font-size:24px;color:#3a3a3a;letter-spacing:-0.316px;">Aug 12</span>
<span class="t r" style="left:956.50px;top:972.00px;font-size:24px;color:#3a3a3a;letter-spacing:-0.580px;">Sep 12</span>
<span class="t r" style="left:1094.05px;top:972.00px;font-size:24px;color:#3a3a3a;letter-spacing:1.311px;">MQL</span>
<span class="t l" style="left:1210.61px;top:971.00px;font-size:24px;color:#3a3a3a;letter-spacing:1.530px;">--</span>
<span class="t r" style="left:98.17px;top:1048.00px;font-size:24px;color:#3a3a3a;letter-spacing:0.548px;">Nia Duran</span>
<span class="t r" style="left:261.35px;top:1048.00px;font-size:24px;color:#3a3a3a;letter-spacing:0.463px;">nia@email</span>
<span class="t r" style="left:420.16px;top:1048.00px;font-size:24px;color:#3a3a3a;letter-spacing:0.329px;">Head of C</span>
<span class="t r" style="left:577.69px;top:1048.00px;font-size:24px;color:#3a3a3a;letter-spacing:0.743px;">Vonics</span>
<span class="t r" style="left:746.42px;top:1048.00px;font-size:24px;color:#3a3a3a;letter-spacing:1.695px;">80</span>
<span class="t r" style="left:828.05px;top:1048.00px;font-size:24px;color:#3a3a3a;letter-spacing:-0.682px;">Feb 19</span>
<span class="t r" style="left:955.80px;top:1048.00px;font-size:24px;color:#3a3a3a;letter-spacing:0.747px;">Mar 20</span>
<span class="t r" style="left:1094.05px;top:1048.00px;font-size:24px;color:#3a3a3a;letter-spacing:1.311px;">MQL</span>
<span class="t l" style="left:1210.61px;top:1047.00px;font-size:24px;color:#3a3a3a;letter-spacing:1.530px;">--</span>
<span class="t r" style="left:88.92px;top:1122.00px;font-size:24px;color:#6a6a6a;letter-spacing:0.727px;">8 results</span>
<span class="t r" style="left:749.92px;top:1122.00px;font-size:24px;color:#757575;letter-spacing:-0.685px;">Page 1 of 1</span>
<span class="t m" style="left:1670.19px;top:271.00px;font-size:24px;color:#6b74da;letter-spacing:0.733px;">Lead Info</span>
<span class="t m" style="left:1829.60px;top:271.00px;font-size:24px;color:#3a3a3a;letter-spacing:0.946px;">Company Info</span>
<span class="t m" style="left:2038.18px;top:271.00px;font-size:24px;color:#3a3a3a;letter-spacing:0.954px;">Bulk Update</span>
<span class="t m" style="left:2229.43px;top:271.00px;font-size:24px;color:#3a3a3a;letter-spacing:0.659px;">Book Event</span>
<span class="t r" style="left:1670.71px;top:345.00px;font-size:32px;color:#3a3a3a;letter-spacing:1.170px;">Dillon Allison</span>
<span class="t bd" style="left:2055.37px;top:353.00px;font-size:24px;color:#999;letter-spacing:0.358px;">Email:</span>
<span class="t r" style="left:2139.81px;top:353.00px;font-size:24px;color:#3a3a3a;letter-spacing:0.488px;">dillon@email.com</span>
<span class="t wm" style="left:1892.98px;top:413.00px;font-size:24px;color:#fff;letter-spacing:0.372px;">San Diego, California</span>
<span class="t wm" style="left:1736.20px;top:481.00px;font-size:24px;color:#fff;letter-spacing:0.578px;">Search Company</span>
<span class="t wm" style="left:2116.20px;top:481.00px;font-size:24px;color:#fff;letter-spacing:0.356px;">Search Users</span>
<span class="t wm" style="left:1782.51px;top:549.00px;font-size:24px;color:#fff;letter-spacing:1.317px;">Intercom</span>
<span class="t wm" style="left:2127.59px;top:551.00px;font-size:24px;color:#fff;letter-spacing:1.233px;">Amplitude</span>
<span class="t wm" style="left:1953.65px;top:619.00px;font-size:24px;color:#fff;letter-spacing:0.706px;">gmail.com</span>
<span class="t r" style="left:1674.50px;top:701.00px;font-size:24px;color:#3a3a3a;letter-spacing:1.058px;">Status</span>
<span class="t r" style="left:1902.67px;top:701.00px;font-size:24px;color:#3a3a3a;letter-spacing:1.067px;">MQL</span>
<span class="t r" style="left:1674.16px;top:769.00px;font-size:24px;color:#3a3a3a;letter-spacing:0.824px;">Position</span>
<span class="t r" style="left:1902.67px;top:769.00px;font-size:24px;color:#d9d9d9;letter-spacing:0.518px;">Position Here</span>
<span class="t r" style="left:1674.56px;top:837.00px;font-size:24px;color:#3a3a3a;letter-spacing:0.832px;">Company</span>
<span class="t r" style="left:1902.67px;top:837.00px;font-size:24px;color:#3a3a3a;letter-spacing:2.124px;">N/A</span>
<span class="t r" style="left:1674.16px;top:905.00px;font-size:24px;color:#3a3a3a;letter-spacing:0.522px;">Employees</span>
<span class="t r" style="left:1903.70px;top:905.00px;font-size:24px;color:#3a3a3a;letter-spacing:0.000px;">0</span>
<span class="t r" style="left:1674.16px;top:973.00px;font-size:24px;color:#3a3a3a;letter-spacing:1.081px;">Linkedin</span>
<span class="t r" style="left:1902.67px;top:973.00px;font-size:24px;color:#d9d9d9;letter-spacing:0.342px;">Linkedin URL Here</span>
<span class="t wm" style="left:1932.36px;top:1055.00px;font-size:24px;color:#fff;letter-spacing:0.632px;">Update Leads</span>
<span class="t wm" style="left:1933.81px;top:1125.00px;font-size:24px;color:#fff;letter-spacing:0.753px;">Report Filters</span>
<span class="t l" style="left:1656.69px;top:1227.00px;font-size:28px;color:#3a3a3a;letter-spacing:0.253px;">Current Plan: Trial Expiring a year ago</span>
<span class="t m" style="left:1657.46px;top:1273.00px;font-size:24px;color:#3a3a3a;letter-spacing:0.456px;">Set New Trail Date</span>
<span class="t r" style="left:1678.70px;top:1315.00px;font-size:24px;color:#3a3a3a;letter-spacing:-0.539px;">+ 1 Week</span>
<span class="t r" style="left:1838.53px;top:1315.00px;font-size:24px;color:#3a3a3a;letter-spacing:0.167px;">+ 2 Week</span>
<span class="t r" style="left:1991.50px;top:1315.00px;font-size:24px;color:#3a3a3a;letter-spacing:0.813px;">Custom Date</span>
<span class="t r" style="left:2175.15px;top:1313.00px;font-size:24px;color:#dddddd;letter-spacing:1.555px;">mm/dd/yyyy</span>
<span class="t wm" style="left:1758.49px;top:1371.00px;font-size:24px;color:#fff;letter-spacing:0.878px;">Extend Trial</span>
<span class="t wm" style="left:2122.49px;top:1371.00px;font-size:24px;color:#fff;letter-spacing:0.799px;">Restart Trial</span>
<span class="t wm" style="left:123.67px;top:1255.00px;font-size:24px;color:#fff;letter-spacing:0.680px;">GitHub Unavailable</span>
<span class="t wm" style="left:533.35px;top:1255.00px;font-size:24px;color:#fff;letter-spacing:0.906px;">Twitter Unavailable</span>
<span class="t wm" style="left:1152.52px;top:1255.00px;font-size:24px;color:#fff;letter-spacing:0.573px;">Add Notes +</span>
<span class="t r" style="left:662.56px;top:1315.00px;font-size:24px;color:#3a3a3a;letter-spacing:0.353px;">Current Time: 2:00 PM PST</span>
<span class="t r" style="left:228.92px;top:1373.00px;font-size:24px;color:#999;letter-spacing:0.408px;">First Seen:</span>
<span class="t r" style="left:373.18px;top:1373.00px;font-size:24px;color:#3a3a3a;letter-spacing:0.925px;">10/20/2020 6:00 AM</span>
<span class="t r" style="left:950.16px;top:1373.00px;font-size:24px;color:#999;letter-spacing:0.532px;">Last Seen:</span>
<span class="t r" style="left:1083.18px;top:1373.00px;font-size:24px;color:#3a3a3a;letter-spacing:0.814px;">10/24/2020 11:00 AM | Offline</span>
</div>
</body></html>
